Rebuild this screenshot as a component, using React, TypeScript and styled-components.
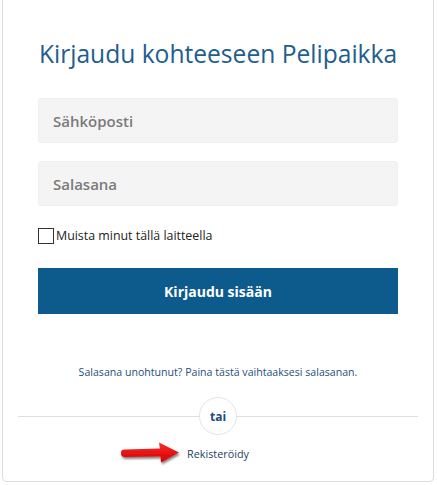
import React from 'react'
import styled, { createGlobalStyle } from 'styled-components'

const GlobalStyle = createGlobalStyle`
    body {
        margin: 0;
        background: #ffffff;
        font-family: "Open Sans", "Noto Sans", sans-serif;
    }
`

const Page = styled.div`
    width: 437px;
    height: 485px;
    overflow: hidden;
`

const Card = styled.div`
    box-sizing: border-box;
    margin-left: 2px;
    width: 432px;
    height: 482px;
    border: 1px solid #dcdcdc;
    border-top: none;
    border-radius: 0 0 5px 5px;
    background: #fff;
    padding: 36px 35px 0 35px;
    display: flex;
    flex-direction: column;
`

const Title = styled.h1`
    margin: 0 0 26px 0;
    text-align: center;
    font-weight: 400;
    font-size: 24.6px;
    line-height: 36px;
    color: #215e8e;
`

const Field = styled.input`
    box-sizing: border-box;
    width: 100%;
    height: 45px;
    margin-bottom: 18px;
    padding: 0 14px;
    border: 1px solid #efefef;
    border-radius: 3px;
    background: #f4f4f4;
    font-family: "Open Sans", sans-serif;
    font-size: 15px;
    font-weight: 600;
    outline: none;
    &::placeholder {
        color: #7a7a7a;
    }
`

const CheckRow = styled.label`
    display: flex;
    align-items: center;
    margin-top: 3px;
    font-size: 12.4px;
    color: #222;
`

const Box = styled.span`
    box-sizing: border-box;
    width: 16px;
    height: 16px;
    border: 1px solid #333;
    background: #fff;
    margin-right: 2px;
`

const SubmitButton = styled.button`
    margin-top: 24px;
    height: 46px;
    width: 100%;
    border: none;
    background: #0d5a8c;
    color: #fff;
    font-family: "Open Sans", sans-serif;
    font-weight: 700;
    font-size: 14px;
`

const ForgotLink = styled.a`
    margin-top: 51px;
    text-align: center;
    font-size: 10.6px;
    color: #1f4f7c;
    text-decoration: none;
`

const Divider = styled.div`
    display: flex;
    align-items: center;
    margin: 18px -20px 0 -20px;
`

const Line = styled.div`
    flex: 1;
    height: 1px;
    background: #dedede;
`

const OrCircle = styled.div`
    width: 38px;
    height: 38px;
    box-sizing: border-box;
    border: 1px solid #e4e4e4;
    border-radius: 50%;
    display: flex;
    align-items: center;
    justify-content: center;
    font-size: 12px;
    font-weight: 700;
    color: #1d4d78;
`

const RegisterRow = styled.div`
    display: flex;
    justify-content: center;
    margin-top: 11px;
`

const RegisterLink = styled.a`
    position: relative;
    font-size: 10.8px;
    color: #1d3f63;
    text-decoration: none;
`

const Arrow = styled.svg`
    position: absolute;
    right: 100%;
    top: -6px;
    margin-right: 2px;
`

function RedArrow() {
    return (
        <Arrow width="70" height="28" viewBox="0 0 70 28">
            <defs>
                <filter id="sh" x="-20%" y="-50%" width="140%" height="200%">
                    <feDropShadow dx="1" dy="2" stdDeviation="1.3" floodColor="#000" floodOpacity="0.5" />
                </filter>
                <linearGradient id="rg" x1="0" y1="0" x2="0" y2="1">
                    <stop offset="0" stopColor="#ff2b2b" />
                    <stop offset="1" stopColor="#d00000" />
                </linearGradient>
            </defs>
            <path
                filter="url(#sh)"
                fill="url(#rg)"
                d="M6 13 C6 10 7.5 9.5 10 9.5 L45 8.5 L44 2.5 L64 12.5 L46 22.5 L45.5 16.5 L10 17 C7.5 17 6 16 6 13 Z"
            />
        </Arrow>
    )
}

export default function App() {
    return (
        <Page>
            <GlobalStyle />
            <Card>
                <Title>Kirjaudu kohteeseen Pelipaikka</Title>
                <Field placeholder="Sähköposti" />
                <Field placeholder="Salasana" type="password" />
                <CheckRow>
                    <Box />
                    Muista minut tällä laitteella
                </CheckRow>
                <SubmitButton>Kirjaudu sisään</SubmitButton>
                <ForgotLink href="#">Salasana unohtunut? Paina tästä vaihtaaksesi salasanan.</ForgotLink>
                <Divider>
                    <Line />
                    <OrCircle>tai</OrCircle>
                    <Line />
                </Divider>
                <RegisterRow>
                    <RegisterLink href="#">
                        <RedArrow />
                        Rekisteröidy
                    </RegisterLink>
                </RegisterRow>
            </Card>
        </Page>
    )
}
